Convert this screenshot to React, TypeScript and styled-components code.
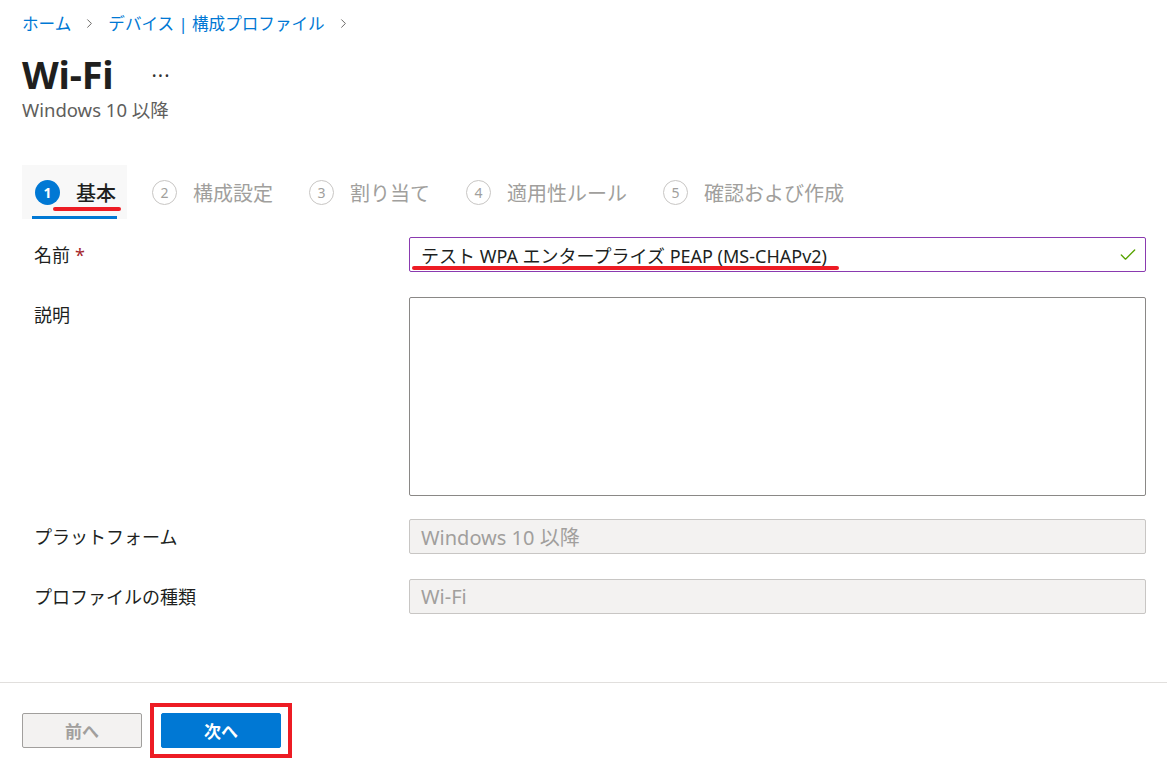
import styled, { createGlobalStyle } from "styled-components";
import { ChevronRight, Check } from "lucide-react";

const GlobalStyle = createGlobalStyle`
  html, body {
    margin: 0;
    padding: 0;
    background: #ffffff;
  }
  body {
    font-family: "Noto Sans", "Noto Sans CJK JP", sans-serif;
    color: #323130;
  }
`;

const Page = styled.div`
  width: 1167px;
  height: 779px;
  display: flex;
  flex-direction: column;
  box-sizing: border-box;
  overflow: hidden;
`;

const Header = styled.div`
  padding: 8px 22px 0;
`;

const Breadcrumb = styled.nav`
  display: flex;
  align-items: center;
  gap: 11px;
  height: 30px;
  font-size: 16.6px;
  color: #0078d4;

  svg {
    color: #605e5c;
  }
`;

const TitleRow = styled.div`
  display: flex;
  align-items: center;
  gap: 38px;
  margin-top: 14px;
  height: 44px;
`;

const Title = styled.h1`
  margin: 0;
  font-size: 38px;
  font-weight: 700;
  letter-spacing: -0.2px;
  color: #201f1e;
  line-height: 44px;
`;

const More = styled.span`
  font-size: 20px;
  color: #323130;
  letter-spacing: 1px;
  margin-top: 2px;
`;

const Subtitle = styled.div`
  font-size: 18.5px;
  color: #605e5c;
  margin-top: 2px;
  line-height: 24px;
`;

const Tabs = styled.div`
  display: flex;
  gap: 12px;
  margin-top: 43px;
  height: 54px;
`;

const Tab = styled.div<{ $active?: boolean }>`
  position: relative;
  display: flex;
  align-items: center;
  gap: 16px;
  padding: 0 11px 0 13px;
  background: ${(p) => (p.$active ? "#f8f8f8" : "transparent")};
  font-size: 20px;
  color: ${(p) => (p.$active ? "#201f1e" : "#a19f9d")};
  font-weight: ${(p) => (p.$active ? 500 : 400)};

  ${(p) =>
    p.$active &&
    `
    &::after {
      content: "";
      position: absolute;
      left: 10px;
      right: 10px;
      bottom: 0;
      height: 3px;
      background: #0078d4;
    }
  `}
`;

const StepCircle = styled.span<{ $active?: boolean }>`
  box-sizing: border-box;
  width: 25px;
  height: 25px;
  border-radius: 50%;
  display: flex;
  align-items: center;
  justify-content: center;
  font-family: "Noto Sans", sans-serif;
  font-size: 14px;
  font-weight: ${(p) => (p.$active ? 700 : 400)};
  background: ${(p) => (p.$active ? "#0078d4" : "transparent")};
  color: ${(p) => (p.$active ? "#ffffff" : "#a19f9d")};
  border: ${(p) => (p.$active ? "none" : "1.5px solid #c8c6c4")};
`;

const RedMark = styled.span<{ $left: number; $top: number; $width: number }>`
  position: absolute;
  left: ${(p) => p.$left}px;
  top: ${(p) => p.$top}px;
  width: ${(p) => p.$width}px;
  height: 4px;
  border-radius: 2px;
  background: #ed1c24;
  pointer-events: none;
`;

const Form = styled.div`
  display: grid;
  grid-template-columns: 375px 737px;
  row-gap: 23.5px;
  padding: 18px 0 0 34px;
`;

const Label = styled.div`
  font-size: 18px;
  line-height: 36px;
  color: #201f1e;
`;

const Required = styled.span`
  color: #a4262c;
  margin-left: 5px;
`;

const Field = styled.div<{ $state?: "valid" | "disabled" | "normal"; $tall?: boolean }>`
  position: relative;
  box-sizing: border-box;
  height: ${(p) => (p.$tall ? "199px" : "35px")};
  border-radius: 2px;
  border: 1px solid
    ${(p) =>
      p.$state === "valid"
        ? "#8a3ab0"
        : p.$state === "disabled"
        ? "#c8c6c4"
        : "#8a8886"};
  background: ${(p) => (p.$state === "disabled" ? "#f3f2f1" : "#ffffff")};
  color: ${(p) => (p.$state === "disabled" ? "#a19f9d" : "#201f1e")};
  display: flex;
  align-items: ${(p) => (p.$tall ? "flex-start" : "center")};
  justify-content: space-between;
  padding: 0 7px 0 11px;
  font-size: ${(p) => (p.$state === "disabled" ? "20px" : "18px")};
  white-space: nowrap;

  svg {
    color: #57a300;
  }
`;

const Spacer = styled.div`
  flex: 1;
`;

const Footer = styled.div`
  border-top: 1px solid #e1dfdd;
  display: flex;
  align-items: flex-start;
  gap: 8px;
  padding: 20px 22px 0;
  height: 97px;
  box-sizing: border-box;
`;

const Button = styled.button<{ $primary?: boolean }>`
  box-sizing: border-box;
  width: 120px;
  height: 35px;
  border-radius: 2px;
  font-family: "Noto Sans CJK JP", sans-serif;
  font-size: 17px;
  font-weight: 700;
  border: 1px solid ${(p) => (p.$primary ? "#0078d4" : "#a19f9d")};
  background: ${(p) => (p.$primary ? "#0078d4" : "#f3f2f1")};
  color: ${(p) => (p.$primary ? "#ffffff" : "#a19f9d")};
  cursor: pointer;
`;

const Outline = styled.div`
  border: 4px solid #ed1c24;
  padding: 6px 7px;
`;

const BackWrap = styled.div`
  padding-top: 10px;
`;

const steps = ["基本", "構成設定", "割り当て", "適用性ルール", "確認および作成"];

export default function App() {
  return (
    <>
      <GlobalStyle />
      <Page>
        <Header>
          <Breadcrumb>
            <span>ホーム</span>
            <ChevronRight size={15} strokeWidth={1.5} />
            <span>デバイス | 構成プロファイル</span>
            <ChevronRight size={15} strokeWidth={1.5} />
          </Breadcrumb>
          <TitleRow>
            <Title>Wi-Fi</Title>
            <More>···</More>
          </TitleRow>
          <Subtitle>Windows 10 以降</Subtitle>
          <Tabs>
            {steps.map((s, i) => (
              <Tab key={s} $active={i === 0}>
                <StepCircle $active={i === 0}>{i + 1}</StepCircle>
                <span>{s}</span>
                {i === 0 && <RedMark $left={31} $top={42} $width={68} />}
              </Tab>
            ))}
          </Tabs>
        </Header>

        <Form>
          <Label>
            名前<Required>*</Required>
          </Label>
          <Field $state="valid">
            <span>テスト WPA エンタープライズ PEAP (MS-CHAPv2)</span>
            <Check size={20} strokeWidth={1.6} />
            <RedMark $left={2} $top={28} $width={427} />
          </Field>

          <Label>説明</Label>
          <Field $tall />

          <Label>プラットフォーム</Label>
          <Field $state="disabled">
            <span>Windows 10 以降</span>
          </Field>

          <Label>プロファイルの種類</Label>
          <Field $state="disabled">
            <span>Wi-Fi</span>
          </Field>
        </Form>

        <Spacer />

        <Footer>
          <BackWrap>
            <Button>前へ</Button>
          </BackWrap>
          <Outline>
            <Button $primary>次へ</Button>
          </Outline>
        </Footer>
      </Page>
    </>
  );
}
